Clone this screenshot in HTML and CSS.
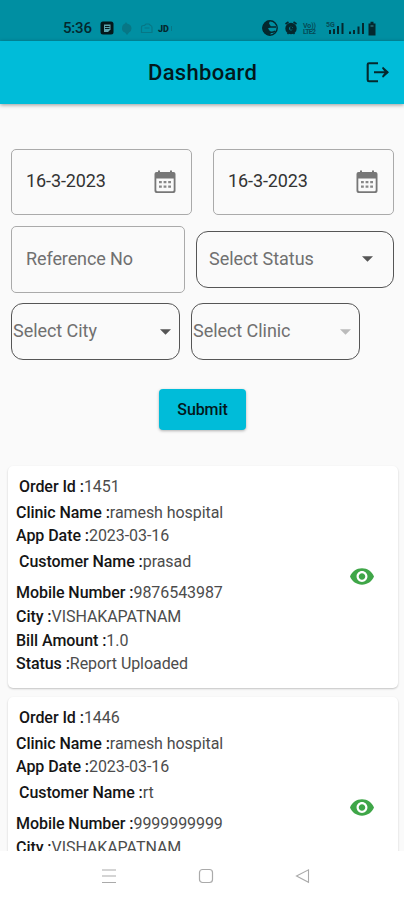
FILE: index.html
```
<!DOCTYPE html>
<html lang="en">
<head>
<meta charset="utf-8">
<title>Dashboard</title>
<link rel="stylesheet" href="styles.css">
</head>
<body>
<svg class="defs" aria-hidden="true">
  <symbol id="calendar" viewBox="0 0 22 24">
    <path fill="#777" d="M4 2V.5h2V2h10V.5h2V2h1.500q2 0 2 2v17q0 2-2 2h-17q-2 0-2-2V4q0-2 2-2z"/>
    <path fill="#fafafa" d="M2.300 8.500h17.400V20q0 1.200-1.200 1.200h-15q-1.200 0-1.200-1.200z"/>
    <path fill="#888" d="M5 11h2.800v2.300H5zm4.600 0h2.800v2.300H9.600zm4.600 0H17v2.300h-2.800zM5 15.500h2.800v2.300H5zm4.600 0h2.800v2.300H9.600zm4.600 0H17v2.300h-2.800z"/>
  </symbol>
  <symbol id="eye" viewBox="1 4.500 22 15">
    <path fill="#3fa648" d="M12 4.500C7 4.500 2.730 7.610 1 12c1.730 4.390 6 7.500 11 7.500s9.270-3.110 11-7.500c-1.730-4.390-6-7.500-11-7.500zM12 17c-2.760 0-5-2.240-5-5s2.240-5 5-5 5 2.240 5 5-2.240 5-5 5zm0-8c-1.660 0-3 1.340-3 3s1.340 3 3 3 3-1.340 3-3-1.340-3-3-3z"/>
  </symbol>
  <symbol id="caret" viewBox="0 0 10 5"><path fill="currentColor" d="M0 0h10L5 5z"/></symbol>
</svg>
<div class="screen">
  <div class="status">
    <span class="clock">5:36</span>
    <svg class="left-icons" width="76" height="16" viewBox="0 0 76 16">
      <rect x="0.500" y="1.500" width="13" height="13" rx="2.500" fill="#04181b"/>
      <path d="M4 4.500h6.500v5L8 12H4z" fill="#5ba4ae"/><path d="M5 6.500h4.500M5 8.500h4.500" stroke="#04181b"/>
      <path d="M26 2l1 1.500q4.500 1 4.500 5 0 3-2.500 4l-2 2.500-2-2.500q-3-1-3-4Q22 4.500 25 3.500z" fill="#077786"/>
      <path d="M41.500 12.500v-5q0-2 2-2h1l1.500-1.500h3l1.500 1.500q1.500 0 1.500 2v5zM44.500 8h5" fill="none" stroke="#077786" stroke-width="1.200"/>
      <text x="58" y="11.500" class="jd">JD</text><path d="M71.500 6v5" stroke="#077786"/>
    </svg>
    <svg class="right-icons" width="118" height="18" viewBox="0 0 118 18">
      <circle cx="9" cy="9" r="7.200" fill="none" stroke="#04282e" stroke-width="1.400"/>
      <path d="M9 1.500a7.500 7.500 0 0 0 0 15l1-3-3-4 3-2-2-3z" fill="#04282e"/><path d="M6 8h9M9 13q3 1 5-1" stroke="#04282e" stroke-width="1.500" fill="none"/>
      <circle cx="30" cy="9.500" r="3.800" fill="none" stroke="#04282e" stroke-width="3.800"/>
      <path d="M24.500 5l3-2M35.500 5l-3-2M26.500 15l1-1M33.500 15l-1-1M30 7.500v2.500h2" stroke="#04282e" stroke-width="1.700"/>
      <text x="42" y="8.500" class="tiny" textLength="13">Vo))</text><text x="42" y="15" class="tiny" textLength="13">LTE2</text>
      <text x="65" y="8" class="tiny">5G</text>
      <path d="M69 15v-4M73 15v-5M77 15V7M81.500 15V4M89 15v-2.500M93 15v-4M97.500 15V7.500M102 15V4" stroke="#04282e" stroke-width="2"/>
      <path d="M107.500 4.500h2v-1.700h3v1.700h2v12h-7z" fill="#04282e"/><path d="M109.500 7h3" stroke="#276c76" stroke-width="1.500"/>
    </svg>
  </div>
  <header class="appbar">
    <h1>Dashboard</h1>
    <svg class="logout" width="24" height="22" viewBox="0 0 24 22">
      <path d="M12 1.300H3Q1.700 1.300 1.700 2.500V18q0 1.200 1.300 1.200h9M8 10.200h14" fill="none" stroke="#05282e" stroke-width="2.100"/>
      <path d="M17 4.700l6 5.500-6 5.500-1-1.500 3-4-3-4z" fill="#05282e"/>
    </svg>
  </header>
  <main>
    <div class="filters">
      <div class="row dates">
        <div class="field"><span>16-3-2023</span><svg class="cal"><use href="#calendar"/></svg></div>
        <div class="field"><span>16-3-2023</span><svg class="cal"><use href="#calendar"/></svg></div>
      </div>
      <div class="row second">
        <div class="field reference"><span>Reference No</span></div>
        <div class="select state"><span>Select Status</span><svg class="caret"><use href="#caret"/></svg></div>
      </div>
      <div class="row third">
        <div class="select"><span>Select City</span><svg class="caret"><use href="#caret"/></svg></div>
        <div class="select"><span>Select Clinic</span><svg class="caret off"><use href="#caret"/></svg></div>
      </div>
      <button class="submit">Submit</button>
    </div>
    <div class="orders">
      <article class="card">
        <div class="info">
          <p class="lead"><b>Order Id :</b><span>1451</span></p>
          <p><b>Clinic Name :</b><span>ramesh hospital</span></p>
          <p><b>App Date :</b><span>2023-03-16</span></p>
          <p class="lead customer"><b>Customer Name :</b><span>prasad</span></p>
          <p><b>Mobile Number :</b><span>9876543987</span></p>
          <p><b>City :</b><span>VISHAKAPATNAM</span></p>
          <p><b>Bill Amount :</b><span>1.0</span></p>
          <p><b>Status :</b><span>Report Uploaded</span></p>
        </div>
        <svg class="eye"><use href="#eye"/></svg>
      </article>
      <article class="card">
        <div class="info">
          <p class="lead"><b>Order Id :</b><span>1446</span></p>
          <p><b>Clinic Name :</b><span>ramesh hospital</span></p>
          <p><b>App Date :</b><span>2023-03-16</span></p>
          <p class="lead customer"><b>Customer Name :</b><span>rt</span></p>
          <p><b>Mobile Number :</b><span>9999999999</span></p>
          <p><b>City :</b><span>VISHAKAPATNAM</span></p>
        </div>
        <svg class="eye"><use href="#eye"/></svg>
      </article>
    </div>
  </main>
  <nav class="navbar">
    <svg width="16" height="16" viewBox="0 0 16 16"><path d="M1 2h14M1 8h14M1 14.500h14" stroke="#aaa" stroke-width="1.200"/></svg>
    <svg width="16" height="16" viewBox="0 0 16 16"><rect x="1.500" y="1.500" width="13" height="13" rx="3" fill="none" stroke="#aaa" stroke-width="1.200"/></svg>
    <svg width="16" height="16" viewBox="0 0 16 16"><path d="M1.500 8L13.500 1.800v12.500z" fill="none" stroke="#aaa" stroke-width="1.100"/></svg>
  </nav>
</div>
</body>
</html>
```
FILE: styles.css
```
* { box-sizing: border-box; }
body { margin: 0; font-family: Roboto, sans-serif; color: #222; background: #fafafa; }
.defs { display: none; }
.screen { width: 404px; height: 900px; display: flex; flex-direction: column; overflow: hidden; }
.status { height: 41px; flex: none; background: #008fa2; display: flex; align-items: flex-end; padding: 0 26px 4px 63px; }
.clock { font-size: 15px; line-height: 18px; font-weight: 500; color: #04282e; letter-spacing: -.2px; width: 37px; }
.left-icons { margin-bottom: 1px; }
.right-icons { margin-left: auto; margin-right: -1px; }
.jd { font: 900 9px Roboto, sans-serif; fill: #04282e; }
.tiny { font: 700 7px Roboto, sans-serif; fill: #064b56; }
.appbar { height: 63px; flex: none; background: #00bcd9; display: flex; align-items: center; justify-content: center; padding-left: 148px; padding-right: 14px; box-shadow: 0 1px 4px rgba(0,0,0,.4); z-index: 1; }
h1 { margin: 0; font-size: 22px; font-weight: 500; color: #03181c; letter-spacing: .3px; flex: 1; }
.logout { flex: none; }
main { flex: 1; min-height: 0; overflow: hidden; padding: 44.500px 6px 0 8px; }
.filters { display: flex; flex-direction: column; padding-left: 3px; height: 317px; }
.row { display: flex; }
.dates { gap: 21px; }
.field { width: 181px; height: 66px; border: 1px solid #aaa; border-radius: 5px; display: flex; align-items: center; justify-content: space-between; padding: 0 15px 0 14px; font-size: 18px; letter-spacing: -.1px; color: #333; }
.field span, .select span { padding-bottom: 2px; }
.cal { width: 22px; height: 24px; }
.second { margin-top: 11px; gap: 11px; align-items: center; }
.second .reference { width: 174px; height: 67px; color: #707070; }
.select { width: 169px; height: 57px; border: 1px solid #555; border-radius: 12px; display: flex; align-items: center; justify-content: space-between; padding: 0 8px 0 1px; font-size: 18px; letter-spacing: -.05px; color: #707070; }
.second .state { width: 198px; padding: 0 20px 0 12px; }
.third { margin-top: 10.500px; gap: 11px; }
.caret { width: 11px; height: 6px; color: #555; }
.off { color: #bbb; }
.submit { margin: 29px 0 0 148px; width: 87px; height: 41px; border: 0; border-radius: 4px; background: #00bcd9; color: #03181c; font: 500 16px Roboto, sans-serif; letter-spacing: -.1px; box-shadow: 0 1px 3px rgba(0,0,0,.3); padding: 0; }
.orders { display: flex; flex-direction: column; gap: 9px; }
.card { height: 222px; width: 390px; flex: none; background: #fff; border-radius: 5px; box-shadow: 0 1px 2px rgba(0,0,0,.22); padding: 7px 24px 0 8px; display: flex; justify-content: space-between; }
.eye { width: 24px; height: 17px; margin-top: 95px; }
.info p { margin: 0; height: 23.700px; line-height: 23.700px; font-size: 16px; letter-spacing: -.06px; white-space: nowrap; color: #4c4c4c; }
.info p.lead { height: 28px; line-height: 28px; padding-left: 3px; }
.info p.customer { margin-bottom: 5.500px; }
.info b { font-weight: 500; color: #151515; }
.navbar { height: 49px; flex: none; background: #fff; display: flex; align-items: center; justify-content: center; gap: 81px; padding-left: 7px; z-index: 1; }
```
